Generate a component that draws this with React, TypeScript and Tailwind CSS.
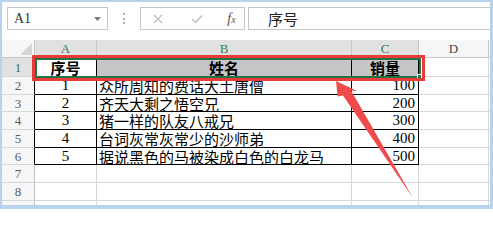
import React from "react";

const rows = [
    { n: "1", name: "众所周知的费话大土唐僧", qty: "100" },
    { n: "2", name: "齐天大剩之悟空兄", qty: "200" },
    { n: "3", name: "猪一样的队友八戒兄", qty: "300" },
    { n: "4", name: "台词灰常灰常少的沙师弟", qty: "400" },
    { n: "5", name: "据说黑色的马被染成白色的白龙马", qty: "500" },
];

const cjk = { fontFamily: '"Noto Sans CJK SC", sans-serif' };
const num = { fontFamily: '"Liberation Serif", serif' };

function RowHead({ label, dark }: { label: string; dark?: boolean }) {
    return (
        <div
            className={`w-[33px] shrink-0 flex items-center justify-center border-b border-b-[#d8d8d8] border-r bg-[#f6f6f6] text-[13px] leading-[13px] text-[#5a5a5a] ${
                dark ? "border-r-black" : "border-r-[#c0c0c0]"
            }`}
            style={num}
        >
            {label}
        </div>
    );
}

export default function App() {
    return (
        <div className="relative w-[493px] h-[209px] overflow-hidden bg-white border-t-2 border-l-2 border-r-[3px] border-b-4 border-[#b9d3ee]">
            {/* formula bar */}
            <div className="h-[38px] flex items-start pt-[5px] pl-[5px]">
                <div className="w-[101px] h-[23px] shrink-0 border border-[#c6c6c6] flex items-center justify-between pl-[6px] pr-[6px]">
                    <span className="text-[14px] text-[#333] leading-none" style={num}>
                        A1
                    </span>
                    <svg width="7" height="4" viewBox="0 0 7 4">
                        <path d="M0 0 H7 L3.5 4 Z" fill="#7a7a7a" />
                    </svg>
                </div>
                <div className="w-[32px] shrink-0 flex flex-col items-center gap-[2.5px] pt-[6px]">
                    <span className="w-[2px] h-[2px] bg-[#b0b0b0]" />
                    <span className="w-[2px] h-[2px] bg-[#b0b0b0]" />
                    <span className="w-[2px] h-[2px] bg-[#b0b0b0]" />
                </div>
                <div className="w-[105px] h-[23px] shrink-0 border border-[#c6c6c6] flex items-center">
                    <div className="w-[34px] flex justify-center">
                        <svg width="10" height="10" viewBox="0 0 10 10">
                            <path d="M1 1 L9 9 M9 1 L1 9" stroke="#bdbdbd" strokeWidth="1.3" />
                        </svg>
                    </div>
                    <div className="w-[44px] flex justify-center">
                        <svg width="12" height="10" viewBox="0 0 12 10">
                            <path d="M1 5 L4.5 8.5 L11 1.5" stroke="#bdbdbd" strokeWidth="1.4" fill="none" />
                        </svg>
                    </div>
                    <div className="w-[25px] flex justify-center items-baseline italic text-[#555]" style={num}>
                        <span className="text-[14px] leading-none">f</span>
                        <span className="text-[10px] leading-none">x</span>
                    </div>
                </div>
                <div className="ml-[3px] flex-1 h-[23px] border border-r-0 border-[#c6c6c6] flex items-center pl-[19px]">
                    <span className="text-[15px] text-[#222] leading-none" style={cjk}>
                        序号
                    </span>
                </div>
            </div>

            {/* column headers */}
            <div className="flex h-[18px] text-[13px] leading-[13px]" style={num}>
                <div className="w-[33px] shrink-0 flex items-end justify-end pr-[2px] pb-[2px] bg-[#f6f6f6] border-r border-b border-[#c8c8c8]">
                    <svg width="12" height="12" viewBox="0 0 12 12">
                        <path d="M12 0 V12 H0 Z" fill="#d6d6d6" />
                    </svg>
                </div>
                <div className="w-[62px] shrink-0 flex items-center justify-center bg-[#e1e1e1] text-[#3b7a53] border-r border-b border-[#c8c8c8]">A</div>
                <div className="w-[255px] shrink-0 flex items-center justify-center bg-[#e1e1e1] text-[#3b7a53] border-r border-b border-[#c8c8c8]">B</div>
                <div className="w-[67px] shrink-0 flex items-center justify-center bg-[#e1e1e1] text-[#3b7a53] border-r border-b border-[#c8c8c8]">C</div>
                <div className="w-[70px] shrink-0 flex items-center justify-center bg-[#f6f6f6] text-[#444] border-r border-b border-[#c8c8c8]">D</div>
                <div className="flex-1 bg-[#f6f6f6] border-b border-[#c8c8c8]" />
            </div>

            {/* row 1: header of the table */}
            <div className="flex h-[19px] text-[15px] leading-[15px] font-bold text-black" style={cjk}>
                <div className="w-[33px] shrink-0 flex items-center justify-center bg-[#e1e1e1] text-[13px] leading-[13px] font-normal text-[#3b7a53] border-r border-r-black border-b border-b-[#d8d8d8]" style={num}>
                    1
                </div>
                <div className="w-[62px] shrink-0 flex items-center justify-center bg-white border-r border-b border-black">序号</div>
                <div className="w-[255px] shrink-0 flex items-center justify-center bg-[#c6c6c6] border-r border-b border-black">姓名</div>
                <div className="w-[67px] shrink-0 flex items-center justify-center bg-[#c6c6c6] border-r border-b border-black">销量</div>
                <div className="w-[70px] shrink-0 border-r border-b border-[#d8d8d8]" />
                <div className="flex-1 border-b border-[#d8d8d8]" />
            </div>

            {/* data rows */}
            {rows.map((r, i) => (
                <div key={r.n} className="flex h-[17.7px] text-[15px] leading-[15px] text-black">
                    <RowHead label={String(i + 2)} dark />
                    <div className="w-[62px] shrink-0 flex items-center justify-center border-r border-b border-black" style={num}>
                        {r.n}
                    </div>
                    <div className="w-[255px] shrink-0 flex items-center pl-[2px] border-r border-b border-black whitespace-nowrap" style={cjk}>
                        {r.name}
                    </div>
                    <div className="w-[67px] shrink-0 flex items-center justify-end pr-[3px] border-r border-b border-black" style={num}>
                        {r.qty}
                    </div>
                    <div className="w-[70px] shrink-0 border-r border-b border-[#d8d8d8]" />
                    <div className="flex-1 border-b border-[#d8d8d8]" />
                </div>
            ))}

            {/* empty rows */}
            {["7", "8", ""].map((n) => (
                <div key={n || "9"} className="flex h-[17.7px]">
                    <RowHead label={n} />
                    <div className="w-[62px] shrink-0 border-r border-b border-[#d8d8d8]" />
                    <div className="w-[255px] shrink-0 border-r border-b border-[#d8d8d8]" />
                    <div className="w-[67px] shrink-0 border-r border-b border-[#d8d8d8]" />
                    <div className="w-[70px] shrink-0 border-r border-b border-[#d8d8d8]" />
                    <div className="flex-1 border-b border-[#d8d8d8]" />
                </div>
            ))}

            {/* selection of A1:C1 */}
            <div className="absolute left-[33px] top-[56px] w-[386px] h-[20px] border-2 border-[#217346]">
                <span className="absolute -right-[3px] -bottom-[3px] w-[5px] h-[5px] bg-[#217346] border border-white" />
            </div>

            {/* red highlight box */}
            <div className="absolute left-[30px] top-[53px] w-[393px] h-[26px] border-[3px] border-[#ea3b3b]" />

            {/* red arrow */}
            <svg className="absolute -left-[2px] -top-[2px] pointer-events-none" width="493" height="209" viewBox="0 0 493 209">
                <polygon
                    points="336,81 357,91 351,90.5 413,198 343,95.5 337.7,96.5"
                    fill="#f14a4a"
                />
            </svg>
        </div>
    );
}
